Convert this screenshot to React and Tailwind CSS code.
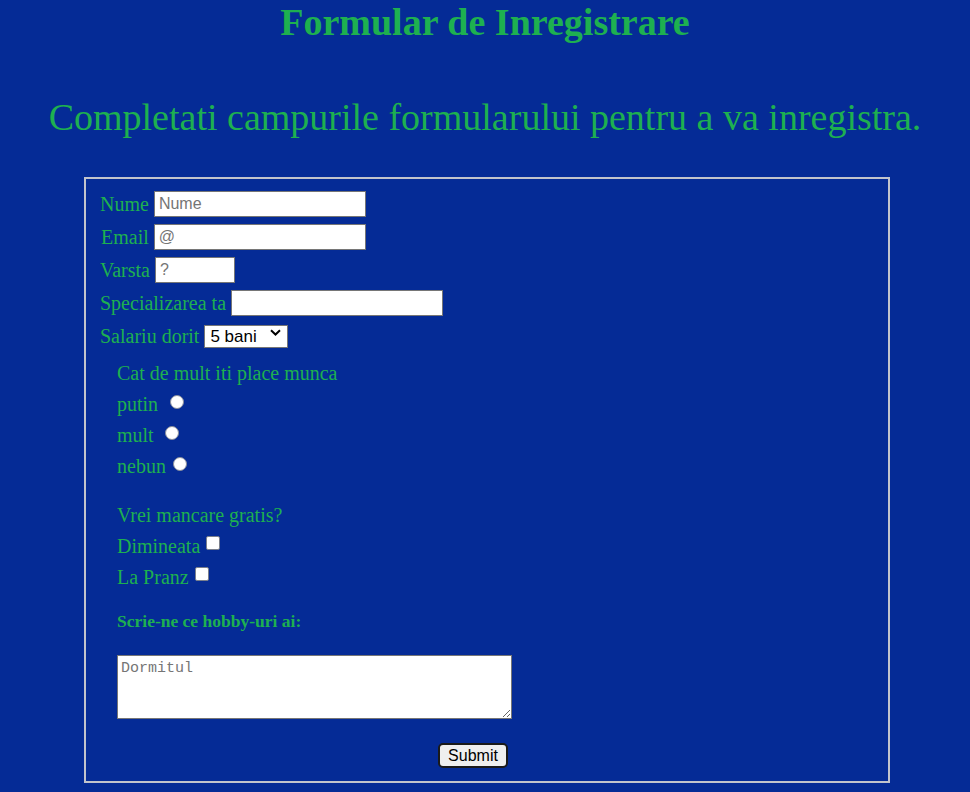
import React from 'react';

const green = 'text-[#1eb050]';

function FieldRow({ children }) {
  return <div className="flex h-[33px] items-center gap-[5px]">{children}</div>;
}

function TextBox({ width, placeholder }) {
  return (
    <input
      type="text"
      placeholder={placeholder}
      className={`h-[26px] ${width} border border-[#767676] bg-white px-[4px] font-['Liberation_Sans',Arial,sans-serif] text-[16px] text-black outline-none placeholder:text-[#757575]`}
    />
  );
}

function Radio({ ml }) {
  return (
    <input
      type="radio"
      name="munca"
      className={`${ml} mb-[4px] h-[14px] w-[14px] appearance-none rounded-full border border-[#8a8f9c] bg-white`}
    />
  );
}

function Check() {
  return (
    <input
      type="checkbox"
      className="mb-[5px] ml-[6px] h-[14px] w-[14px] appearance-none rounded-[2px] border border-[#7a7f8c] bg-white"
    />
  );
}

export default function App() {
  return (
    <div className={`min-h-screen bg-[#052b96] font-['Liberation_Serif','Times_New_Roman',serif] ${green}`}>
      <h1 className="h-[44px] text-center text-[38px] font-bold leading-[44px]">Formular de Inregistrare</h1>
      <p className="mt-[51px] text-center text-[38px] leading-[44px]">
        Completati campurile formularului pentru a va inregistra.
      </p>

      <form
        className="ml-[84px] mt-[38px] w-[806px] border-2 border-[#c2c4cc] pb-[13px] pl-[14px] pt-[8px] text-[20px]"
        onSubmit={(e) => e.preventDefault()}
      >
        <FieldRow>
          <span>Nume</span>
          <TextBox width="w-[212px]" placeholder="Nume" />
        </FieldRow>
        <FieldRow>
          <span className="ml-[1px]">Email</span>
          <TextBox width="w-[212px]" placeholder="@" />
        </FieldRow>
        <FieldRow>
          <span>Varsta</span>
          <TextBox width="w-[80px]" placeholder="?" />
        </FieldRow>
        <FieldRow>
          <span>Specializarea ta</span>
          <TextBox width="w-[212px]" placeholder="" />
        </FieldRow>
        <FieldRow>
          <span>Salariu dorit</span>
          <div className="relative mb-[2px]">
            <select className="h-[23px] w-[84px] appearance-none border border-[#767676] bg-white pl-[5px] font-['Liberation_Sans',Arial,sans-serif] text-[17px] leading-[21px] text-black outline-none">
              <option>5 bani</option>
              <option>10 bani</option>
              <option>50 bani</option>
            </select>
            <svg
              className="pointer-events-none absolute right-[7px] top-[9px]"
              width="11"
              height="7"
              viewBox="0 0 11 7"
              fill="none"
            >
              <path d="M1 1.2L5.5 5.5L10 1.2" stroke="#000" strokeWidth="2" />
            </svg>
          </div>
        </FieldRow>

        <div className="ml-[17px]">
          <div className="mt-[5px]">
            <div className="flex h-[31px] items-center">Cat de mult iti place munca</div>
            <div className="flex h-[31px] items-center">
              <span>putin</span>
              <Radio ml="ml-[12px]" />
            </div>
            <div className="flex h-[31px] items-center">
              <span>mult</span>
              <Radio ml="ml-[11px]" />
            </div>
            <div className="flex h-[31px] items-center">
              <span>nebun</span>
              <Radio ml="ml-[7px]" />
            </div>
          </div>

          <div className="mt-[18px]">
            <div className="flex h-[31px] items-center">Vrei mancare gratis?</div>
            <div className="flex h-[31px] items-center">
              <span>Dimineata</span>
              <Check />
            </div>
            <div className="flex h-[31px] items-center">
              <span>La Pranz</span>
              <Check />
            </div>
          </div>

          <h5 className="mt-[19px] h-[20px] text-[17.5px] font-bold leading-[20px]">Scrie-ne ce hobby-uri ai:</h5>

          <textarea
            placeholder="Dormitul"
            className="mt-[24px] block h-[64px] w-[395px] border border-[#767676] bg-white px-[3px] py-[2px] font-['Liberation_Mono','Courier_New',monospace] text-[15px] text-black outline-none placeholder:text-[#757575]"
          />

          <button
            type="submit"
            className="ml-[321px] mt-[24px] block h-[25px] w-[70px] rounded-[5px] border-2 border-[#1a1a1a] bg-[#efefef] font-['Liberation_Sans',Arial,sans-serif] text-[16px] leading-[20px] text-black"
          >
            Submit
          </button>
        </div>
      </form>
    </div>
  );
}
